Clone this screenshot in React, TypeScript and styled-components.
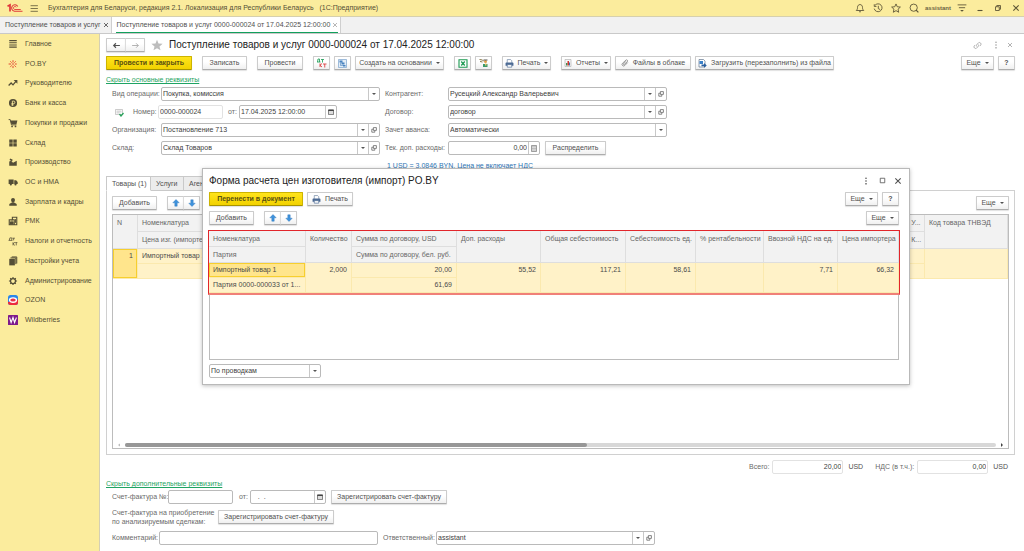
import React, { useState } from 'react';
import styled, { createGlobalStyle } from 'styled-components';

const GlobalStyle = createGlobalStyle`
  *, *::before, *::after { box-sizing: border-box; }
  html, body { margin: 0; padding: 0; background: #fff; }
  body, button, input, select, table {
    font-family: "Liberation Sans", Arial, sans-serif;
    font-size: 7px;
    line-height: 10px;
    color: #505050;
  }
  button, input, select { margin: 0; padding: 0; border-radius: 0; }
  svg { display: block; flex: none; }
`;

/* ---------- shell ---------- */

const Shell = styled.div`
  display: flex;
  flex-direction: column;
  min-height: 100vh;
  position: relative;
`;

const TitleBar = styled.header`
  display: flex;
  align-items: center;
  height: 17px;
  padding: 0 3px 0 7px;
  background: #fbec9d;
  border-bottom: 1px solid #d6d0ae;
`;

const AppTitle = styled.span`
  margin-left: 9px;
  white-space: pre;
  color: #544e36;
`;

const TitleTools = styled.div`
  display: flex;
  align-items: center;
  gap: 8px;
  margin-left: auto;
`;

const UserName = styled.span`
  font-size: 6px;
  font-weight: bold;
  color: #6b6344;
  margin: 0 -2px;
`;

const PlainButton = styled.button`
  display: flex;
  align-items: center;
  justify-content: center;
  width: 10px;
  height: 10px;
  border: 0;
  background: none;
  color: #5b5436;
`;

const DialogButton = styled(PlainButton)`
  color: #505050;
`;

const PaleButton = styled(PlainButton)`
  color: #a0a0a0;
`;

const WindowTabs = styled.nav`
  display: flex;
  height: 17px;
  background: #f1f1f1;
  border-bottom: 1px solid #c9c9c9;
`;

const WindowTab = styled.div<{ $active?: boolean }>`
  display: flex;
  align-items: center;
  height: 16px;
  padding: 0 2px 0 4px;
  border-right: 1px solid #cfcfcf;
  background: ${p => (p.$active ? '#fff' : 'transparent')};
`;

const WindowTabLabel = styled.span<{ $active?: boolean }>`
  display: flex;
  align-items: center;
  gap: 2px;
  height: 16px;
  border-bottom: 1px solid ${p => (p.$active ? '#12a05c' : 'transparent')};
  padding: 0 0 0 1px;
  white-space: nowrap;
`;

const TabClose = styled(PlainButton)<{ $dim?: boolean }>`
  width: 6px;
  color: ${p => (p.$dim ? '#a5a5a5' : '#444')};
`;

const Body = styled.div`
  display: flex;
  flex: 1;
`;

const Sidebar = styled.nav`
  flex: none;
  width: 100px;
  background: #fbec9d;
  border-right: 1px solid #d4cfb4;
`;

const Menu = styled.ul`
  display: grid;
  grid-template-rows: repeat(15, 1fr);
  height: 296px;
  margin: 0;
  padding: 0;
  list-style: none;
`;

const MenuLink = styled.a`
  display: flex;
  align-items: center;
  gap: 7px;
  height: 100%;
  padding-left: 8px;
  color: #544e36;
  text-decoration: none;
`;

const Main = styled.main`
  display: flex;
  flex-direction: column;
  flex: 1;
  min-width: 0;
  padding: 4px 9px 6px 6px;
`;

/* ---------- buttons ---------- */

const Button = styled.button<{ $primary?: boolean; $w?: number }>`
  display: inline-flex;
  align-items: center;
  justify-content: center;
  gap: 4px;
  flex: none;
  height: 14px;
  width: ${p => (p.$w ? `${p.$w}px` : 'auto')};
  border: 1px solid ${p => (p.$primary ? '#cdb400' : '#cccccc')};
  border-bottom-color: ${p => (p.$primary ? '#a89400' : '#adadad')};
  border-radius: 1px;
  background: ${p =>
    p.$primary
      ? 'linear-gradient(#ffe41c, #f2d200)'
      : 'linear-gradient(#ffffff 40%, #f0f0f0)'};
  box-shadow: 0 1px 1px rgba(0, 0, 0, 0.12);
  font-weight: ${p => (p.$primary ? 'bold' : 'normal')};
  color: ${p => (p.$primary ? '#5a5010' : '#505050')};
  white-space: nowrap;
`;

const ButtonPair = styled.div`
  display: flex;
  & > button + button { border-left-color: #dcdcdc; margin-left: -1px; }
`;

const Toolbar = styled.div<{ $gap?: number; $top?: number }>`
  display: flex;
  align-items: center;
  gap: ${p => p.$gap ?? 4}px;
  margin-top: ${p => p.$top ?? 0}px;
`;

const ToolGroup = styled.div<{ $end?: boolean }>`
  display: flex;
  gap: 4px;
  margin-left: ${p => (p.$end ? 'auto' : '0')};
`;

const Heading = styled.h1`
  margin: 0;
  font-size: 10px;
  line-height: 14px;
  font-weight: normal;
  color: #222;
  white-space: nowrap;
`;

const GreenLink = styled.a`
  align-self: flex-start;
  margin-top: 5px;
  line-height: 10px;
  color: #1fa463;
  text-decoration: underline;
`;

const BlueLink = styled.a`
  display: block;
  margin: 6px 0 5px 281px;
  line-height: 10px;
  color: #2f76b5;
`;

/* ---------- form ---------- */

const FormGrid = styled.div`
  display: grid;
  grid-template-columns: 268px 282px;
  gap: 4px 5px;
  margin-top: 2px;
  padding-left: 6px;
`;

const FormRow = styled.div<{ $top?: number; $indent?: boolean }>`
  display: flex;
  align-items: center;
  height: 14px;
  margin-top: ${p => p.$top ?? 0}px;
  padding-left: ${p => (p.$indent ? 6 : 0)}px;
`;

const Label = styled.label<{ $w?: number }>`
  flex: none;
  width: ${p => (p.$w ? `${p.$w}px` : 'auto')};
  color: #6a6a6a;
  white-space: nowrap;
`;

const TwoLineLabel = styled(Label)`
  line-height: 9px;
`;

const Box = styled.div<{ $w?: number; $pale?: boolean }>`
  display: flex;
  flex: ${p => (p.$w ? 'none' : '1')};
  width: ${p => (p.$w ? `${p.$w}px` : 'auto')};
  height: 14px;
  border: 1px solid ${p => (p.$pale ? '#e2e2e2' : '#bababa')};
  border-radius: 2px;
  background: #fff;
`;

const TextInput = styled.input<{ $right?: boolean }>`
  flex: 1;
  min-width: 0;
  width: 100%;
  padding: 0 1px;
  border: 0;
  outline: 0;
  background: transparent;
  color: #404040;
  text-align: ${p => (p.$right ? 'right' : 'left')};
`;

const Select = styled.select`
  appearance: none;
  flex: 1;
  min-width: 0;
  padding: 0 1px;
  border: 0;
  outline: 0;
  background: transparent;
  color: #404040;
`;

const ArrowCell = styled.span`
  display: flex;
  align-items: center;
  justify-content: center;
  width: 11px;
  border-left: 1px solid #c8c8c8;
  color: #555;
`;

const CellButton = styled.button`
  display: flex;
  align-items: center;
  justify-content: center;
  width: 11px;
  border: 0;
  border-left: 1px solid #c8c8c8;
  background: none;
`;

const Gap = styled.span<{ $w: number }>`
  flex: none;
  width: ${p => p.$w}px;
`;

/* ---------- tabs and tables ---------- */

const PageTabs = styled.div`
  display: flex;
  height: 15px;
  margin-bottom: -1px;
  z-index: 1;
`;

const PageTab = styled.button<{ $active?: boolean; $w: number }>`
  width: ${p => p.$w}px;
  padding: 0 5px;
  border: 1px solid #c9c9c9;
  border-left-width: ${p => (p.$active ? 1 : 0)}px;
  border-bottom-color: ${p => (p.$active ? '#fff' : '#c9c9c9')};
  background: ${p => (p.$active ? '#fff' : '#ececec')};
  text-align: left;
  white-space: nowrap;
`;

const TabPanel = styled.section`
  display: flex;
  flex-direction: column;
  flex: 1;
  padding: 5px;
  border: 1px solid #d0d0d0;
`;

const Sheet = styled.div`
  display: flex;
  flex-direction: column;
  flex: 1;
  margin-top: 4px;
  border: 1px solid #bcbcbc;
`;

const Table = styled.table<{ $headRow: number }>`
  width: 100%;
  table-layout: fixed;
  border-collapse: separate;
  border-spacing: 0;
  & th { height: ${p => p.$headRow}px; }
`;

const Th = styled.th`
  padding: 0 4px;
  border-right: 1px solid #dedede;
  border-bottom: 1px solid #dedede;
  background: #f2f2f2;
  color: #666;
  font-weight: normal;
  text-align: left;
  vertical-align: top;
  line-height: 15px;
  white-space: nowrap;
`;

const Td = styled.td<{ $right?: boolean; $current?: boolean }>`
  height: 15px;
  padding: 0 4px;
  border-right: 1px solid #fbe9ae;
  border-bottom: 1px solid #fbe9ae;
  background: ${p => (p.$current ? '#ffe58c' : '#fff2c8')};
  box-shadow: ${p => (p.$current ? 'inset 0 0 0 1px #f7cf2e' : 'none')};
  color: #4a4a4a;
  text-align: ${p => (p.$right ? 'right' : 'left')};
  vertical-align: top;
  line-height: 14px;
  white-space: nowrap;
`;

const ScrollRow = styled.div`
  display: flex;
  align-items: center;
  gap: 4px;
  height: 6px;
  margin-top: auto;
  padding: 0 4px;
`;

const ScrollTrack = styled.div`
  flex: 1;
  height: 4px;
  border-radius: 2px;
  background: #d8d8d8;
`;

const ScrollThumb = styled.div`
  width: 53%;
  height: 4px;
  border-radius: 2px;
  background: #979797;
`;

const Totals = styled.div`
  display: flex;
  align-items: center;
  justify-content: flex-end;
  gap: 3px;
  margin-top: 5px;
  padding-right: 7px;
`;

const Currency = styled.span`
  margin-left: 2px;
`;

/* ---------- dialog ---------- */

const Dialog = styled.section`
  position: absolute;
  top: 168px;
  left: 202px;
  right: 114px;
  z-index: 5;
  display: flex;
  flex-direction: column;
  padding: 4px 10px 6px 6px;
  border: 1px solid #b9b9b9;
  background: #fff;
  box-shadow: 0 1px 4px rgba(0, 0, 0, 0.25);
`;

const DialogHead = styled.div`
  display: flex;
  align-items: center;
  height: 15px;
`;

const DialogTools = styled.div`
  display: flex;
  gap: 6px;
  margin-left: auto;
  margin-right: -4px;
`;

const DialogSheet = styled.div`
  height: 130px;
  margin: 5px 0 4px;
  border: 1px solid #bcbcbc;
`;

const RedFrame = styled.div`
  margin: -1px -2px 0;
  border: 1px solid #e2262b;
  border-bottom: 2px solid #f08078;
`;

/* ---------- icons ---------- */

const Icon = ({ s = 10, children }: { s?: number; children: React.ReactNode }) => (
  <svg width={s} height={s} viewBox="0 0 16 16" fill="none" stroke="currentColor" strokeWidth="1.4" aria-hidden="true">
    {children}
  </svg>
);

const Caret = () => (
  <svg width="4" height="2" viewBox="0 0 4 2" aria-hidden="true"><path d="M0 0h4L2 2z" fill="currentColor" /></svg>
);
const Cross = ({ s = 6 }: { s?: number }) => (
  <svg width={s} height={s} viewBox="0 0 6 6" stroke="currentColor" strokeWidth=".8" aria-hidden="true"><path d="M1 1l4 4M5 1L1 5" /></svg>
);
const OpenIcon = () => (
  <svg width="6" height="6" viewBox="0 0 6 6" fill="none" stroke="#555" strokeWidth=".7" aria-hidden="true">
    <path d="M2.4.6h3v2.8h-3zM2.2 2.2H.8v3h3V3.6" />
  </svg>
);
const CalendarIcon = () => (
  <svg width="6" height="6" viewBox="0 0 6 6" aria-hidden="true">
    <path d="M.5 1h5v4.6h-5z" fill="#ddd" stroke="#555" strokeWidth=".7" /><path d="M.3.6h5.4v1.4H.3z" fill="#444" />
  </svg>
);
const CalcIcon = () => (
  <svg width="6" height="7" viewBox="0 0 6 7" aria-hidden="true">
    <path d="M.5.5h5v6h-5z" fill="#eee" stroke="#777" strokeWidth=".7" />
    <path d="M1.4 1.8h3.2M1.4 3.4h3.2M1.4 5h3.2" stroke="#777" strokeWidth=".8" strokeDasharray=".8 .4" />
  </svg>
);
const Dots = () => (
  <Icon><g fill="currentColor" stroke="none"><circle cx="8" cy="3.5" r="1.3" /><circle cx="8" cy="8" r="1.3" /><circle cx="8" cy="12.5" r="1.3" /></g></Icon>
);
const Arrow = ({ down }: { down?: boolean }) => (
  <svg width="8" height="8" viewBox="0 0 8 8" aria-hidden="true">
    <path d={down ? 'M4 7.5L.8 4.2H2.8V.8h2.4v3.4h2z' : 'M4 .5L.8 3.8h2v3.4h2.4V3.8h2z'} fill="#3f93dd" stroke="#2a74b8" strokeWidth=".4" />
  </svg>
);
const PrinterIcon = () => (
  <svg width="9" height="9" viewBox="0 0 16 16" aria-hidden="true">
    <path d="M4 7V1h6l2 2v4" fill="#fff" stroke="#6a819f" strokeWidth="1.2" />
    <path d="M2 6h12l1 1v5H1V7z" fill="#4c6a94" /><path d="M4 10h8v4.500H4z" fill="#fff" stroke="#4c6a94" strokeWidth="1.2" />
  </svg>
);
const DtKtIcon = () => (
  <svg width="11" height="10" viewBox="0 0 22 20" fill="none" strokeWidth="1.7" aria-hidden="true">
    <path d="M2 8h7M3 8l1-6h3v6M10 3h6M13 3v6" stroke="#1f9d57" />
    <path d="M8 11v7M12 11l-4 3.500 4 3.500M14 12h7M17.500 12v7" stroke="#d9363a" />
  </svg>
);
const StructureIcon = () => (
  <svg width="9" height="9" viewBox="0 0 18 18" fill="none" aria-hidden="true">
    <path d="M1 1h16v16H1z" fill="#e3edf7" stroke="#7ba3cd" strokeWidth="1.4" />
    <path d="M3 3h6v4H3zM7 7h6v4H7zM10 12h5v3h-5z" fill="#4a84c0" /><path d="M5 7v6h5" stroke="#4a84c0" strokeWidth="1.2" />
  </svg>
);
const ExcelIcon = () => (
  <svg width="10" height="9" viewBox="0 0 20 18" fill="none" aria-hidden="true">
    <path d="M2 1.500h16v15H2z" fill="#fff" stroke="#1c9a52" strokeWidth="2.200" /><path d="M6.500 5l7 8M13.500 5l-7 8" stroke="#1c9a52" strokeWidth="2.600" />
  </svg>
);
const PeopleIcon = () => (
  <svg width="10" height="10" viewBox="0 0 20 20" fill="none" aria-hidden="true">
    <path d="M1 3l6 1 3 3M2 7l5 1" stroke="#8a7a4a" strokeWidth="2" /><circle cx="13" cy="7" r="3" fill="#e3a24d" />
    <path d="M9 3h8v2H9z" fill="#555" /><path d="M8 12h9v6H8z" fill="#3d9a6a" /><path d="M12 11h3v4h-3z" fill="#e9c46a" />
  </svg>
);
const ReportIcon = () => (
  <svg width="8" height="8" viewBox="0 0 16 16" aria-hidden="true">
    <path d="M2 1h12v14H2z" fill="#f7f7f7" stroke="#aaa" strokeWidth="1.200" /><path d="M4 8h3v5H4z" fill="#3f8f4f" /><path d="M7 4h3v9H7z" fill="#d3372f" /><path d="M10 7h2v6h-2z" fill="#3f70b0" />
  </svg>
);
const ClipIcon = () => (
  <svg width="8" height="8" viewBox="0 0 16 16" fill="none" stroke="#777" strokeWidth="1.500" aria-hidden="true">
    <path d="M13.500 7l-6 6a3 3 0 0 1-4.500-4.500l7-6.500a2.200 2.200 0 0 1 3 3l-6.500 6a1 1 0 0 1-1.500-1.500l5-5" />
  </svg>
);
const LoadIcon = () => (
  <svg width="9" height="9" viewBox="0 0 18 18" fill="none" aria-hidden="true">
    <path d="M2 1h9l3 3v12H2z" fill="#fff" stroke="#556b85" strokeWidth="1.300" /><path d="M3 4h7v6H3z" fill="#3a80c8" />
    <path d="M7 11h5V8l5.500 5-5.500 4.500v-3H7z" fill="#2a5f9e" />
  </svg>
);
const PostedIcon = () => (
  <svg width="9" height="9" viewBox="0 0 18 18" fill="none" aria-hidden="true">
    <path d="M1 3h14v10H1z" fill="#fff" stroke="#aaa" strokeWidth="1.200" /><path d="M3 6h10M3 8h10M3 10h6" stroke="#aaa" />
    <path d="M9 12l3 4 5-6" stroke="#29a35c" strokeWidth="2.600" />
  </svg>
);

const Logo = () => (
  <svg width="16" height="10" viewBox="0 0 32 20" fill="none" stroke="#e0383a" aria-hidden="true">
    <path d="M1 6.500L6 4v13" strokeWidth="3.400" />
    <path d="M21.500 7a6.500 6.500 0 1 0-6.500 9.500h16" strokeWidth="2.200" />
    <path d="M18.500 8.500a3 3 0 1 0-3 4.500h12" strokeWidth="1.800" />
  </svg>
);

const F = ({ d }: { d: string }) => <path d={d} fill="currentColor" stroke="none" />;

const menu: { label: string; icon: React.ReactNode }[] = [
  { label: 'Главное', icon: <Icon><path d="M2 2.500h12M2 6h12M2 9.500h12M2 13h12" strokeWidth="1.800" /></Icon> },
  {
    label: 'PO.BY',
    icon: (
      <Icon>
        <g stroke="#e4472e" strokeWidth="1.600"><path d="M8 2v3.500M8 11v3.500M1 8h4M11 8h3" /><path d="M3.500 3.500l2.500 2.500M12.500 3.500L10 6M3.500 13L6 10M13 13l-3-3" stroke="#ea6a3c" /></g>
        <circle cx="8" cy="8" r="1.300" fill="#d33" stroke="none" />
      </Icon>
    ),
  },
  { label: 'Руководителю', icon: <Icon><path d="M1 12l4-4 3 3 5-6" strokeWidth="2" /><F d="M9 3h6v6z" /></Icon> },
  { label: 'Банк и касса', icon: <Icon><F d="M8 1.500a6.500 6.500 0 1 0 0 13 6.500 6.500 0 0 0 0-13z" /><path d="M7 12.500V5h2a1.800 1.800 0 0 1 0 4H5.500M5.500 11H9" stroke="#fbec9d" /></Icon> },
  { label: 'Покупки и продажи', icon: <Icon><F d="M3.500 4H15l-1.500 6H5.500z" /><path d="M1 2.500h2.500L5.500 11h8" /><circle cx="6.500" cy="13.500" r="1.400" fill="currentColor" stroke="none" /><circle cx="12" cy="13.500" r="1.400" fill="currentColor" stroke="none" /></Icon> },
  { label: 'Склад', icon: <Icon><F d="M2 2.500h5.500v5H2zM8.500 2.500H14v5H8.500zM2 8.500h5.500v5H2zM8.500 8.500H14v5H8.500z" /></Icon> },
  { label: 'Производство', icon: <Icon><F d="M2 14V7l3-1 3 3 6-3v8z" /><path d="M3 3.500l4 2" strokeWidth="2.600" /></Icon> },
  { label: 'ОС и НМА', icon: <Icon><F d="M1 4h8v7H1zM10 5h3l2.500 3v3H10z" /><circle cx="4.500" cy="12" r="1.700" fill="currentColor" stroke="none" /><circle cx="12" cy="12" r="1.700" fill="currentColor" stroke="none" /></Icon> },
  { label: 'Зарплата и кадры', icon: <Icon><F d="M8 1.500c4 0 3.500 5 1.500 7h-3c-2-2-2.500-7 1.500-7z" /><F d="M2 14v-2c0-2 4-2 4.500-3.500h3C10 10 14 10 14 12v2z" /></Icon> },
  { label: 'РМК', icon: <Icon><path d="M7 5V2h7v12H2V6h8v8" strokeWidth="1.800" /><F d="M3 9h6v5H3z" /><path d="M4 8h4M12 5v6" strokeWidth="1.500" /></Icon> },
  { label: 'Налоги и отчетность', icon: <Icon><path d="M1 7h6M2 7l1-4h3v4M7 3.500h4M9 3.500V7M8 10v5M11 10l-3 2.500 3 2.500M11.500 10.500H15M13.200 10.500V15" strokeWidth="1.200" /></Icon> },
  { label: 'Настройки учета', icon: <Icon><F d="M2 4.500h9V15H2z" /><path d="M4 3h8.500v10M6 1.500h8V12" strokeWidth="1.600" /></Icon> },
  { label: 'Администрирование', icon: <Icon><circle cx="8" cy="8" r="4" strokeWidth="2" /><path d="M8 1.500V4M8 12v2.500M1.500 8H4M12 8h2.500M3.500 3.500l2 2M10.500 10.500l2 2M12.500 3.500l-2 2M3.500 12.500l2-2" strokeWidth="1.800" /></Icon> },
  {
    label: 'OZON',
    icon: (
      <Icon>
        <rect width="16" height="16" rx="4" fill="#2a86ea" stroke="none" />
        <path d="M0 11l16-4v5a4 4 0 0 1-4 4H4a4 4 0 0 1-4-4z" fill="#ee2a3c" stroke="none" />
        <ellipse cx="8" cy="8" rx="5.500" ry="3.500" fill="#e8304a" stroke="#fff" strokeWidth="2.200" />
      </Icon>
    ),
  },
  {
    label: 'Wildberries',
    icon: <Icon><rect width="16" height="16" rx="1" fill="#7d1a8c" stroke="none" /><path d="M2.500 4l2.500 8 3-8 2.500 8 3-8" stroke="#fff" strokeWidth="1.700" /></Icon>,
  },
];

/* ---------- composed fields ---------- */

const SelectBox = ({ id, value, label, open, w }: { id: string; value: string; label?: string; open?: boolean; w?: number }) => (
  <Box $w={w}>
    <Select id={id} aria-label={label} defaultValue={value}><option>{value}</option></Select>
    <ArrowCell aria-hidden="true"><Caret /></ArrowCell>
    {open && <CellButton aria-label="Открыть"><OpenIcon /></CellButton>}
  </Box>
);

const More = () => <Button $w={33}>Еще <Caret /></Button>;

const MoveButtons = () => (
  <ButtonPair>
    <Button $w={17} aria-label="Вверх"><Arrow /></Button>
    <Button $w={17} aria-label="Вниз"><Arrow down /></Button>
  </ButtonPair>
);

const DocumentForm = () => (
  <FormGrid>
    <FormRow><Label $w={49} htmlFor="kind">Вид операции:</Label><SelectBox id="kind" value="Покупка, комиссия" /></FormRow>
    <FormRow><Label $w={63} htmlFor="party">Контрагент:</Label><SelectBox id="party" value="Русецкий Александр Валерьевич" open w={219} /></FormRow>
    <FormRow>
      <Gap $w={3} /><PostedIcon /><Gap $w={9} />
      <Label $w={25} htmlFor="number">Номер:</Label>
      <Box $w={65} $pale><TextInput id="number" defaultValue="0000-000024" /></Box>
      <Gap $w={5} /><Label $w={11} htmlFor="date">от:</Label>
      <Box $w={98}><TextInput id="date" defaultValue="17.04.2025 12:00:00" /><CellButton aria-label="Календарь"><CalendarIcon /></CellButton></Box>
    </FormRow>
    <FormRow><Label $w={63} htmlFor="contract">Договор:</Label><SelectBox id="contract" value="договор" open w={219} /></FormRow>
    <FormRow><Label $w={49} htmlFor="org">Организация:</Label><SelectBox id="org" value="Постановление 713" open /></FormRow>
    <FormRow><Label $w={63} htmlFor="advance">Зачет аванса:</Label><SelectBox id="advance" value="Автоматически" w={219} /></FormRow>
    <FormRow><Label $w={49} htmlFor="store">Склад:</Label><SelectBox id="store" value="Склад Товаров" open /></FormRow>
    <FormRow>
      <Label $w={63} htmlFor="costs">Тек. доп. расходы:</Label>
      <Box $w={92}><TextInput id="costs" $right defaultValue="0,00" /><CellButton aria-label="Калькулятор"><CalcIcon /></CellButton></Box>
      <Gap $w={5} /><Button $w={61}>Распределить</Button>
    </FormRow>
  </FormGrid>
);

const GoodsTable = () => (
  <Table $headRow={17}>
    <colgroup><col width="25" /><col /><col width="26" /><col width="83" /></colgroup>
    <thead>
      <tr><Th rowSpan={2}>N</Th><Th>Номенклатура</Th><Th>% У...</Th><Th rowSpan={2}>Код товара ТНВЭД</Th></tr>
      <tr><Th>Цена изг. (импортера)</Th><Th>% К...</Th></tr>
    </thead>
    <tbody>
      <tr><Td rowSpan={2} $right $current>1</Td><Td>Импортный товар 1</Td><Td /><Td rowSpan={2} /></tr>
      <tr><Td /><Td /></tr>
    </tbody>
  </Table>
);

const PriceTable = () => (
  <Table $headRow={16}>
    <colgroup>
      <col width="97" /><col width="46" /><col width="105" /><col width="84" /><col width="85" /><col width="70" /><col width="68" /><col width="74" /><col />
    </colgroup>
    <thead>
      <tr>
        <Th>Номенклатура</Th><Th rowSpan={2}>Количество</Th><Th>Сумма по договору, USD</Th><Th rowSpan={2}>Доп. расходы</Th>
        <Th rowSpan={2}>Общая себестоимость</Th><Th rowSpan={2}>Себестоимость ед.</Th><Th rowSpan={2}>% рентабельности</Th>
        <Th rowSpan={2}>Ввозной НДС на ед.</Th><Th rowSpan={2}>Цена импортера</Th>
      </tr>
      <tr><Th>Партия</Th><Th>Сумма по договору, бел. руб.</Th></tr>
    </thead>
    <tbody>
      <tr>
        <Td $current>Импортный товар 1</Td><Td rowSpan={2} $right>2,000</Td><Td $right>20,00</Td><Td rowSpan={2} $right>55,52</Td>
        <Td rowSpan={2} $right>117,21</Td><Td rowSpan={2} $right>58,61</Td><Td rowSpan={2} />
        <Td rowSpan={2} $right>7,71</Td><Td rowSpan={2} $right>66,32</Td>
      </tr>
      <tr><Td>Партия 0000-000033 от 1...</Td><Td $right>61,69</Td></tr>
    </tbody>
  </Table>
);

const PriceDialog = ({ onClose }: { onClose: () => void }) => (
  <Dialog role="dialog" aria-labelledby="dialog-title">
    <DialogHead>
      <Heading as="h2" id="dialog-title">Форма расчета цен изготовителя (импорт) PO.BY</Heading>
      <DialogTools>
        <DialogButton aria-label="Меню"><Dots /></DialogButton>
        <DialogButton aria-label="Развернуть"><Icon s={9}><path d="M4 4h8v8H4z" /></Icon></DialogButton>
        <DialogButton aria-label="Закрыть" onClick={onClose}><Cross s={8} /></DialogButton>
      </DialogTools>
    </DialogHead>
    <Toolbar $top={4}>
      <Button $primary $w={94}>Перенести в документ</Button>
      <Button $w={46}><PrinterIcon />Печать</Button>
      <ToolGroup $end><More /><Button $w={17}><b>?</b></Button></ToolGroup>
    </Toolbar>
    <Toolbar $top={5} $gap={10}>
      <Button $w={45}>Добавить</Button>
      <MoveButtons />
      <ToolGroup $end><More /></ToolGroup>
    </Toolbar>
    <DialogSheet><RedFrame><PriceTable /></RedFrame></DialogSheet>
    <SelectBox id="mode" label="Способ расчета" value="По проводкам" w={112} />
  </Dialog>
);

export default function App() {
  const [dialog, setDialog] = useState(true);
  return (
    <Shell>
      <GlobalStyle />
      <TitleBar>
        <Logo />
        <Gap $w={6} />
        <PlainButton aria-label="Меню функций"><Icon s={9}><path d="M1 3h13M1 8h13M1 13h13" /></Icon></PlainButton>
        <AppTitle>{'Бухгалтерия для Беларуси, редакция 2.1. Локализация для Республики Беларусь   (1С:Предприятие)'}</AppTitle>
        <TitleTools>
          <PlainButton aria-label="Уведомления"><Icon><path d="M2 12h12c-2-2-2-3-2-5 0-6-8-6-8 0 0 2 0 3-2 5zM6.500 14h3" /></Icon></PlainButton>
          <PlainButton aria-label="История"><Icon><path d="M3 4a6.300 6.300 0 1 1-1 5M2 2v3.500h3.500M8.500 4.500V9l3 1.500" /></Icon></PlainButton>
          <PlainButton aria-label="Избранное"><Icon><path d="M8 1.500l2 4.500 5 .5-3.700 3.300 1 5L8 12.200l-4.300 2.600 1-5L1 6.500 6 6z" /></Icon></PlainButton>
          <PlainButton aria-label="Поиск"><Icon><circle cx="7.500" cy="7.500" r="5.800" /><path d="M11 11l4 4" strokeWidth="2" /></Icon></PlainButton>
          <UserName>assistant</UserName>
          <PlainButton aria-label="Настройки"><Icon><path d="M1 3h14M3 7.500h10" /><F d="M5 11h6l-3 3z" /></Icon></PlainButton>
          <PlainButton aria-label="Свернуть"><Icon><path d="M4 12h8" strokeWidth="1.800" /></Icon></PlainButton>
          <PlainButton aria-label="Восстановить"><Icon><path d="M4 6h6v6H4zM6 6V4h6v6h-2" /></Icon></PlainButton>
          <PlainButton aria-label="Закрыть"><Cross s={8} /></PlainButton>
        </TitleTools>
      </TitleBar>
      <WindowTabs>
        <WindowTab>
          <WindowTabLabel>Поступление товаров и услуг <TabClose aria-label="Закрыть"><Cross /></TabClose></WindowTabLabel>
        </WindowTab>
        <WindowTab $active>
          <WindowTabLabel $active>Поступление товаров и услуг 0000-000024 от 17.04.2025 12:00:00 <TabClose $dim aria-label="Закрыть"><Cross /></TabClose></WindowTabLabel>
        </WindowTab>
      </WindowTabs>
      <Body>
        <Sidebar>
          <Menu>
            {menu.map(m => (
              <li key={m.label}><MenuLink href="#">{m.icon}{m.label}</MenuLink></li>
            ))}
          </Menu>
        </Sidebar>
        <Main>
          <Toolbar $gap={6}>
            <ButtonPair>
              <Button $w={20} aria-label="Назад"><Icon s={9}><path d="M14 8H3M7 4L3 8l4 4" strokeWidth="2" /></Icon></Button>
              <Button $w={20} aria-label="Вперед"><Icon s={9}><path d="M2 8h11M9 4l4 4-4 4" stroke="#aaa" strokeWidth="1.600" /></Icon></Button>
            </ButtonPair>
            <Icon s={12}><path d="M8 1l2 5 5.500.300-4.200 3.600L12.700 15 8 12.200 3.300 15l1.400-5.100L.5 6.300 6 6z" fill="#bdbdbd" stroke="none" /></Icon>
            <Heading>Поступление товаров и услуг 0000-000024 от 17.04.2025 12:00:00</Heading>
            <ToolGroup $end>
              <PaleButton aria-label="Ссылка"><Icon s={9}><path d="M7 10a3 3 0 0 1 0-4l3-3a3 3 0 0 1 4 4l-2 2M9 6a3 3 0 0 1 0 4l-3 3a3 3 0 0 1-4-4l2-2" /></Icon></PaleButton>
              <Gap $w={1} />
              <PaleButton aria-label="Меню"><Dots /></PaleButton>
              <PaleButton aria-label="Закрыть"><Cross /></PaleButton>
            </ToolGroup>
          </Toolbar>
          <Toolbar $gap={10} $top={4}>
            <Button $primary $w={86}>Провести и закрыть</Button>
            <Button $w={45}>Записать</Button>
            <Button $w={46}>Провести</Button>
            <ToolGroup>
              <Button $w={17} aria-label="Проводки"><DtKtIcon /></Button>
              <Button $w={17} aria-label="Структура"><StructureIcon /></Button>
              <Button $w={89}>Создать на основании <Caret /></Button>
            </ToolGroup>
            <ToolGroup>
              <Button $w={17} aria-label="Excel"><ExcelIcon /></Button>
              <Button $w={17} aria-label="Контрагенты"><PeopleIcon /></Button>
            </ToolGroup>
            <Button $w={49}><PrinterIcon />Печать <Caret /></Button>
            <ToolGroup>
              <Button $w={50}><ReportIcon />Отчеты <Caret /></Button>
              <Button $w={76}><ClipIcon />Файлы в облаке</Button>
              <Button $w={139}><LoadIcon />Загрузить (перезаполнить) из файла</Button>
            </ToolGroup>
            <ToolGroup $end><More /><Button $w={17}><b>?</b></Button></ToolGroup>
          </Toolbar>
          <GreenLink href="#">Скрыть основные реквизиты</GreenLink>
          <DocumentForm />
          <BlueLink href="#">1 USD = 3,0846 BYN, Цена не включает НДС</BlueLink>
          <PageTabs role="tablist">
            <PageTab role="tab" $active $w={45}>Товары (1)</PageTab>
            <PageTab role="tab" $w={33}>Услуги</PageTab>
            <PageTab role="tab" $w={40}>Аген</PageTab>
          </PageTabs>
          <TabPanel>
            <Toolbar $gap={10}>
              <Button $w={45}>Добавить</Button>
              <MoveButtons />
              <ToolGroup $end><More /></ToolGroup>
            </Toolbar>
            <Sheet>
              <GoodsTable />
              <ScrollRow>
                <svg width="4" height="4" viewBox="0 0 4 4" aria-hidden="true"><path d="M3 .5v3L1 2z" fill="#bbb" /></svg>
                <ScrollTrack><ScrollThumb /></ScrollTrack>
                <svg width="4" height="4" viewBox="0 0 4 4" aria-hidden="true"><path d="M1 0v4l2-2z" fill="#444" /></svg>
              </ScrollRow>
            </Sheet>
          </TabPanel>
          <Totals>
            <Label htmlFor="total">Всего:</Label>
            <Box $w={71} $pale><TextInput id="total" $right defaultValue="20,00" /></Box>
            <Currency>USD</Currency>
            <Gap $w={6} />
            <Label htmlFor="vat">НДС (в т.ч.):</Label>
            <Box $w={71} $pale><TextInput id="vat" $right defaultValue="0,00" /></Box>
            <Currency>USD</Currency>
          </Totals>
          <GreenLink href="#">Скрыть дополнительные реквизиты</GreenLink>
          <FormRow $indent $top={1}>
            <Label $w={56} htmlFor="invoice">Счет-фактура №:</Label>
            <Box $w={65}><TextInput id="invoice" /></Box>
            <Gap $w={6} /><Label $w={11} htmlFor="invdate">от:</Label>
            <Box $w={76}><TextInput id="invdate" defaultValue="   .  ." /><CellButton aria-label="Календарь"><CalendarIcon /></CellButton></Box>
            <Gap $w={5} /><Button $w={116}>Зарегистрировать счет-фактуру</Button>
          </FormRow>
          <FormRow $indent $top={6}>
            <TwoLineLabel as="span" $w={106}>Счет-фактура на приобретение<br />по анализируемым сделкам:</TwoLineLabel>
            <Button $w={116}>Зарегистрировать счет-фактуру</Button>
          </FormRow>
          <FormRow $indent $top={7}>
            <Label $w={47} htmlFor="comment">Комментарий:</Label>
            <Box $w={219}><TextInput id="comment" /></Box>
            <Gap $w={5} /><Label $w={53} htmlFor="resp">Ответственный:</Label>
            <SelectBox id="resp" value="assistant" open w={219} />
          </FormRow>
        </Main>
      </Body>
      {dialog && <PriceDialog onClose={() => setDialog(false)} />}
    </Shell>
  );
}
